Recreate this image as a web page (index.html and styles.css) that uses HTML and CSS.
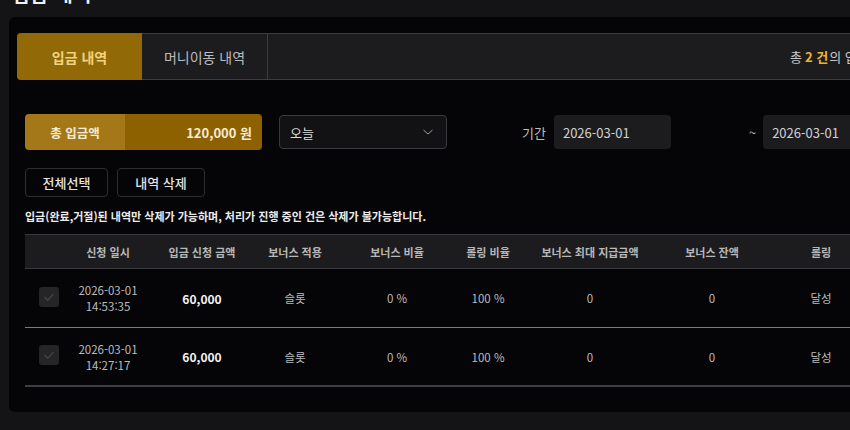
FILE: index.html
```html
<!DOCTYPE html>
<html lang="ko">
<head>
<meta charset="utf-8">
<link rel="stylesheet" href="styles.css">
</head>
<body>
<div class="title">입금 내역</div>
<div class="panel">
  <div class="tabs">
    <div class="tab active">입금 내역</div>
    <div class="tab">머니이동 내역</div>
    <div class="tabs-info">총 <b>2 건</b>의 입금 내역이 있습니다.</div>
  </div>
  <div class="content">
    <div class="filter">
      <div class="total"><span class="total-label">총 입금액</span><span class="total-value">120,000 원</span></div>
      <div class="select"><span>오늘</span>
        <svg width="12" height="8" viewBox="0 0 12 8"><path d="M1.5 2 L6 6 L10.5 2" fill="none" stroke="#9a9a9e" stroke-width="1"/></svg>
      </div>
      <span class="period-label">기간</span>
      <div class="date">2026-03-01</div>
      <span class="tilde">~</span>
      <div class="date">2026-03-01</div>
    </div>
    <div class="actions">
      <button class="btn">전체선택</button>
      <button class="btn">내역 삭제</button>
    </div>
    <p class="notice">입금(완료,거절)된 내역만 삭제가 가능하며, 처리가 진행 중인 건은 삭제가 불가능합니다.</p>
    <div class="table">
      <div class="row head">
        <div></div>
        <div>신청 일시</div>
        <div>입금 신청 금액</div>
        <div>보너스 적용</div>
        <div>보너스 비율</div>
        <div>롤링 비율</div>
        <div>보너스 최대 지급금액</div>
        <div>보너스 잔액</div>
        <div>롤링</div>
      </div>
      <div class="row body">
        <div><span class="check"><svg width="20" height="20" viewBox="0 0 20 20"><rect x="0" y="0" width="20" height="20" rx="3" fill="#252528"/><path d="M5.5 10.2 L8.7 13.2 L14.5 7" fill="none" stroke="#404044" stroke-width="1.6"/></svg></span></div>
        <div class="dt">2026-03-01<br>14:53:35</div>
        <div class="amt">60,000</div>
        <div>슬롯</div>
        <div>0 %</div>
        <div>100 %</div>
        <div>0</div>
        <div>0</div>
        <div>달성</div>
      </div>
      <div class="row body">
        <div><span class="check"><svg width="20" height="20" viewBox="0 0 20 20"><rect x="0" y="0" width="20" height="20" rx="3" fill="#252528"/><path d="M5.5 10.2 L8.7 13.2 L14.5 7" fill="none" stroke="#404044" stroke-width="1.6"/></svg></span></div>
        <div class="dt">2026-03-01<br>14:27:17</div>
        <div class="amt">60,000</div>
        <div>슬롯</div>
        <div>0 %</div>
        <div>100 %</div>
        <div>0</div>
        <div>0</div>
        <div>달성</div>
      </div>
    </div>
  </div>
</div>
</body>
</html>
```
FILE: styles.css
```css
* { box-sizing: border-box; }
html, body {
  margin: 0;
  padding: 0;
  background: #141417;
  overflow: hidden;
  width: 850px;
  height: 430px;
  font-family: "Noto Sans CJK KR", "Noto Sans", sans-serif;
  color: #d0d0d0;
}
.title {
  font-size: 19px;
  line-height: 19px;
  font-weight: 700;
  color: #f2f2f2;
  margin: -16px 0 0 12px;
  height: 19px;
  letter-spacing: 1px;
}
.panel {
  margin: 14px 0 0 9px;
  width: 1000px;
  height: 395px;
  background: #050507;
  border-radius: 6px;
  padding: 16px 0 0 8px;
}
.tabs {
  display: flex;
  align-items: stretch;
  height: 47px;
  background: #1c1c1f;
  border: 1px solid #3c3c40;
  border-radius: 4px;
}
.tab {
  width: 126px;
  display: flex;
  align-items: center;
  justify-content: center;
  font-size: 14px;
  color: #bdbdbd;
  border-right: 1px solid #3c3c40;
}
.tab.active {
  width: 125px;
  background: #926907;
  color: #f1d27e;
  font-weight: 700;
  border-radius: 4px 0 0 4px;
  border-right: none;
  margin: -1px 0 -1px -1px;
}
.tabs-info {
  display: flex;
  align-items: center;
  margin-left: 522px;
  font-size: 13px;
  color: #c8c8c8;
  white-space: nowrap;
}
.tabs-info b {
  color: #e9b52e;
  font-weight: 700;
  margin: 0 1px 0 3px;
}
.content {
  padding-left: 8px;
}
.filter {
  display: flex;
  align-items: center;
  margin-top: 34px;
  height: 36px;
}
.total {
  display: flex;
  width: 237px;
  height: 36px;
  border-radius: 4px;
  overflow: hidden;
  font-weight: 700;
  color: #f4ecd8;
}
.total-label {
  width: 100px;
  background: #a47818;
  display: flex;
  align-items: center;
  justify-content: center;
  font-size: 12.5px;
}
.total-value {
  flex: 1;
  background: #8e6100;
  display: flex;
  align-items: center;
  justify-content: flex-end;
  padding-right: 10px;
  font-size: 13px;
}
.select {
  margin-left: 17px;
  width: 168px;
  height: 34px;
  border: 1px solid #3a3a3e;
  border-radius: 4px;
  background: #121215;
  display: flex;
  align-items: center;
  justify-content: space-between;
  padding: 0 12px 0 10px;
  font-size: 13px;
  color: #dcdcdc;
}
.period-label {
  margin-left: 75px;
  font-size: 13px;
  color: #bdbdbd;
}
.date {
  margin-left: 8px;
  width: 117px;
  height: 34px;
  border-radius: 4px;
  background: #1c1c1f;
  display: flex;
  align-items: center;
  padding-left: 9px;
  font-size: 13px;
  color: #d2d2d2;
}
.tilde {
  margin-left: 78px;
  font-size: 13px;
  color: #bdbdbd;
  margin-right: -1px;
}
.actions {
  display: flex;
  gap: 9px;
  margin-top: 18px;
}
.btn {
  height: 29px;
  background: #050507;
  border: 1px solid #2e2e31;
  border-radius: 4px;
  font-family: inherit;
  font-size: 13px;
  font-weight: 500;
  color: #e4e4e4;
  padding: 0;
  width: 83px;
}
.btn + .btn { width: 88px; }
.notice {
  margin: 11px 0 0 0;
  font-size: 11px;
  line-height: 16px;
  font-weight: 700;
  color: #ececec;
}
.table {
  margin-top: 10px;
  width: 860px;
}
.row {
  display: grid;
  grid-template-columns: 46px 74px 114px 72px 132px 50px 154px 90px 128px;
  align-items: center;
  text-align: center;
  white-space: nowrap;
}
.row.head {
  height: 35px;
  background: #1c1c1f;
  border-top: 1px solid #3a3a3e;
  border-bottom: 1px solid #3a3a3e;
  font-size: 11px;
  font-weight: 700;
  color: #b8b8b8;
}
.row.body {
  height: 59px;
  border-bottom: 1px solid #7a7a7e;
  font-size: 11.5px;
  color: #bcbcbc;
}
.row.body:last-child {
  border-bottom: 2px solid #3e3e42;
}
.check {
  display: inline-flex;
  margin-left: 2px;
}
.dt {
  line-height: 16px;
}
.amt {
  font-weight: 700;
  font-size: 12px;
  color: #f4f4f4;
}
```
